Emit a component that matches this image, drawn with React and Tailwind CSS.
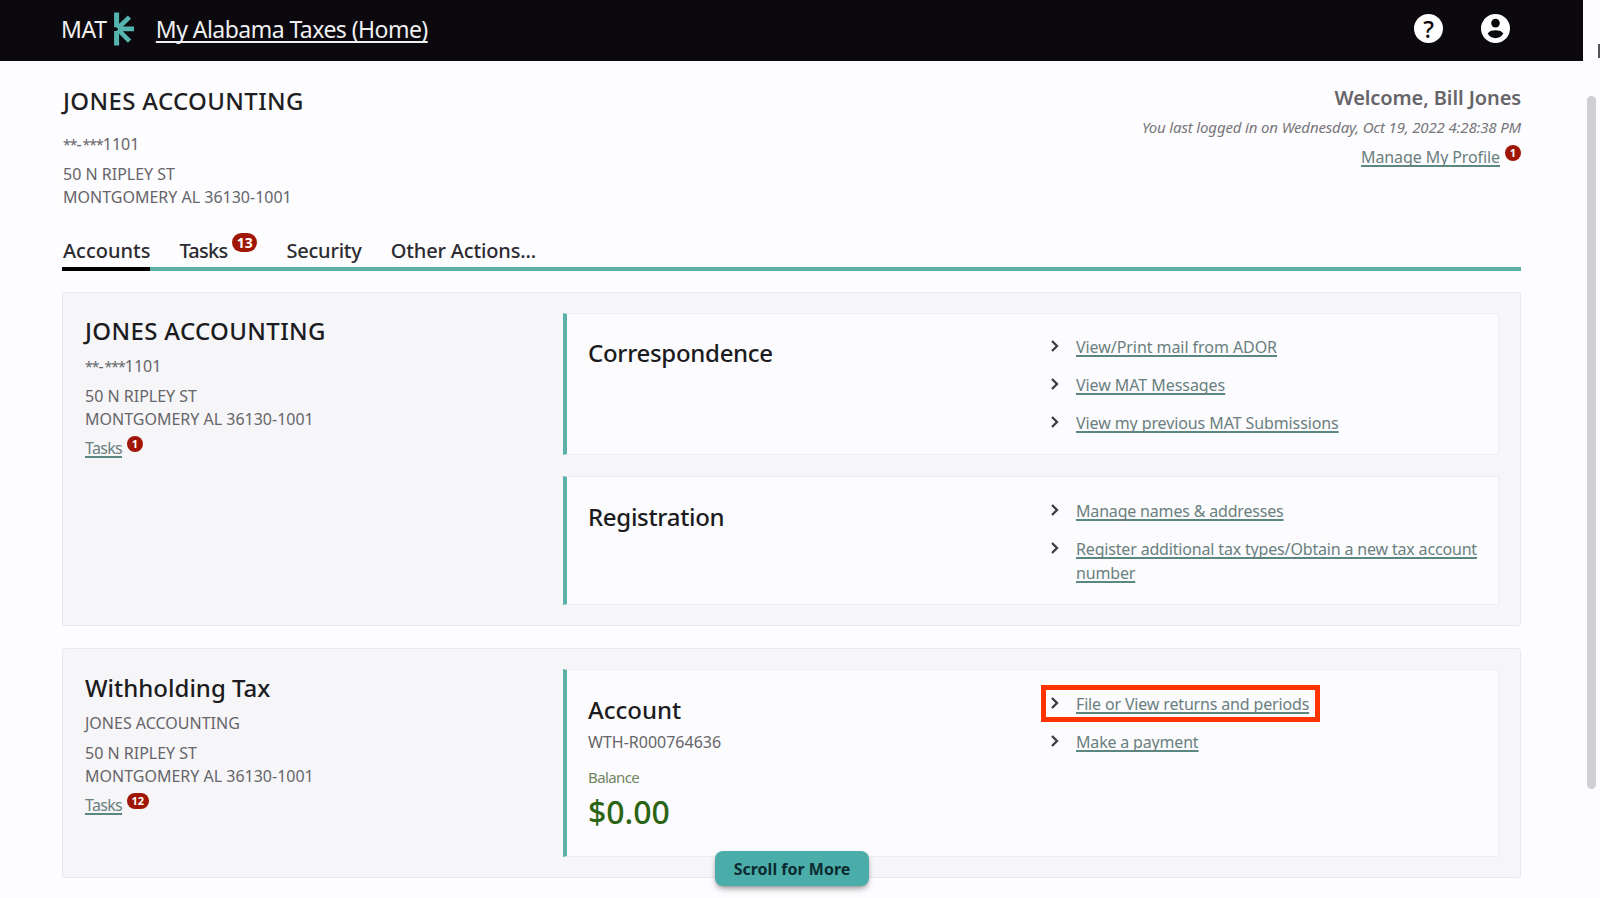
const correspondenceLinks = [
  { label: 'View/Print mail from ADOR', className: 'tracking-[-0.06px]' },
  { label: 'View MAT Messages', className: 'tracking-[-0.06px]' },
  { label: 'View my previous MAT Submissions', className: 'tracking-[-0.1px]' },
];

const registrationLinks = [
  { label: 'Manage names & addresses', className: 'tracking-[-0.18px]' },
  { label: 'Register additional tax types/Obtain a new tax account number', className: 'tracking-[-0.17px]' },
];

const accountLinks = [
  { label: 'File or View returns and periods', className: 'tracking-[-0.16px]', highlighted: true },
  { label: 'Make a payment', className: 'tracking-[-0.18px]' },
];

const linkClass = 'text-[#6a807e] underline decoration-[#5c8681] decoration-[1.5px] underline-offset-[1.5px] [text-decoration-skip-ink:none]';

const Logo = () => (
  <svg className="w-[21px] h-[34px]" viewBox="0 0 21 34" fill="none" stroke="#55b5ae">
    <path d="M2.6 0.5V15.2M2.6 19V33.5" strokeWidth="5" />
    <path d="M4 16.9H20M3.5 16.5L15.5 5.2M4 17.5L15.5 29.2" strokeWidth="4.6" />
  </svg>
);

const HelpIcon = () => (
  <span className="flex h-[29px] w-[29px] items-center justify-center rounded-full bg-white text-[24px] leading-[29px] font-medium text-[#0b090d]">
    ?
  </span>
);

const ProfileIcon = () => (
  <svg className="w-[29px] h-[29px]" viewBox="0 0 29 29">
    <circle cx="14.5" cy="14.5" r="14.5" fill="#fff" />
    <circle cx="14.5" cy="9.1" r="4.3" fill="#0b090d" />
    <path d="M6.7 19.6C7.6 17.4 10.9 16.2 14.5 16.2S21.4 17.4 22.3 19.6C20.7 22.5 17.9 24.2 14.5 24.2S8.3 22.5 6.7 19.6Z" fill="#0b090d" />
  </svg>
);

const Badge = ({ children }) => (
  <span className="flex items-center justify-center h-[16px] min-w-[16px] px-[4.5px] rounded-full bg-[#a01606] text-white text-[11px] font-bold">
    {children}
  </span>
);

const MaskedId = () => (
  <p className="h-[24px] leading-[24px]">
    <span className="text-[14px] leading-none tracking-[-1px]">**</span>
    <span className="tracking-[1px]">-</span>
    <span className="text-[14px] leading-none tracking-[-1px]">***</span>
    1101
  </p>
);

const Address = () => (
  <div className="mt-[6.5px] leading-[23.3px]">
    <p>50 N RIPLEY ST</p>
    <p>MONTGOMERY AL 36130-1001</p>
  </div>
);

const TasksLink = ({ count }) => (
  <div className="mt-[5px] flex items-start gap-[5px]">
    <a href="#" className={`${linkClass} leading-[24px] tracking-[-0.7px]`}>Tasks</a>
    <Badge>{count}</Badge>
  </div>
);

const LinkList = ({ links }) => (
  <ul className="w-[428px] flex flex-col gap-[14.5px]">
    {links.map(link => (
      <li key={link.label} className="relative flex items-start leading-[23.5px]">
        <svg className="w-[8px] h-[12px] mt-[4px] mr-[17px] shrink-0" viewBox="0 0 8 12" fill="none" stroke="#3b3b40" strokeWidth="2.3">
          <path d="M1 1L6 6L1 11" />
        </svg>
        <a href="#" className={`${linkClass} ${link.className}`}>{link.label}</a>
        {link.highlighted && (
          <span className="absolute -left-[10px] -top-[8px] w-[279px] h-[37px] border-[5px] border-[#ff3300]" />
        )}
      </li>
    ))}
  </ul>
);

const Panel = ({ title, titleClass, links, className, children }) => (
  <div className={`flex justify-between border border-l-4 border-[#eeedf0] border-l-[#5cb0a9] bg-[#fcfbfe] pl-[21px] pr-[19px] ${className}`}>
    <div>
      <h3 className={`mt-[1px] text-2xl font-medium text-[#1b1b20] ${titleClass}`}>{title}</h3>
      {children}
    </div>
    <LinkList links={links} />
  </div>
);

const Section = ({ title, titleClass, info, tasks, className, children }) => (
  <section className={`flex rounded-[3px] border border-[#e9e8eb] bg-[#f6f5f8] p-[20px] pr-[21px] ${className}`}>
    <div className="w-[480px] shrink-0 pl-[2px]">
      <h2 className={`mb-[7px] text-2xl font-medium text-[#1b1b20] ${titleClass}`}>{title}</h2>
      {info}
      <Address />
      <TasksLink count={tasks} />
    </div>
    <div className="flex-1 flex flex-col gap-[21px]">{children}</div>
  </section>
);

const Header = () => (
  <header className="h-[61px] bg-[#0b090d] text-[#f0eff2] flex items-center justify-between pl-[61px] pr-[73px] pb-[4px]">
    <div className="flex items-center">
      <span className="text-[23px] tracking-[-0.3px] mt-[2px]">MAT</span>
      <span className="ml-[7px]"><Logo /></span>
      <a href="#" className="ml-[21px] mt-[2px] text-[23px] tracking-[-0.54px] underline decoration-[1.5px] underline-offset-[3px] [text-decoration-skip-ink:none]">
        My Alabama Taxes (Home)
      </a>
    </div>
    <div className="flex items-center gap-[38px]">
      <HelpIcon />
      <ProfileIcon />
    </div>
  </header>
);

const App = () => {
  return (
    <div className="flex h-[898px] w-[1600px] overflow-hidden bg-[#fdfcfe] font-['Noto_Sans',sans-serif] text-base text-[#666569]">
      <div className="relative w-[1583px]">
        <Header />
        <main className="pl-[62px] pr-[62px]">
          <div className="flex justify-between h-[175px]">
            <div className="pt-[24px] pl-px">
              <h1 className="mb-[15px] text-[24px] leading-[32px] text-[#1f1e23] font-medium tracking-[0.35px]">JONES ACCOUNTING</h1>
              <MaskedId />
              <Address />
            </div>
            <div className="pt-[23px] flex flex-col items-end">
              <p className="text-[20px] leading-[28px] font-semibold tracking-[-0.1px]">Welcome, Bill Jones</p>
              <p className="mt-[3px] text-[15px] leading-[24px] italic tracking-[-0.15px] text-[#77767a]">You last logged in on Wednesday, Oct 19, 2022 4:28:38 PM</p>
              <div className="mt-[6px] flex items-start gap-[5px]">
                <a href="#" className={`${linkClass} leading-[24px] tracking-[-0.1px]`}>Manage My Profile</a>
                <Badge>1</Badge>
              </div>
            </div>
          </div>

          <nav className="flex gap-[30px] h-[35px] border-b-4 border-[#5cb0a9] text-[20px] leading-[30px] font-medium text-[#2c2b30]">
            <a href="#" className="h-[35px] border-b-4 border-black pl-px">Accounts</a>
            <a href="#" className="-ml-[1px] flex gap-[5px]">
              <span className="tracking-[-0.75px]">Tasks</span>
              <span className="-mt-[3px] flex h-[19px] w-[25px] items-center justify-center rounded-full bg-[#a01606] text-[14px] font-bold text-white">13</span>
            </a>
            <a href="#" className="-ml-[1px] tracking-[-0.2px]">Security</a>
            <a href="#" className="-ml-[1px] tracking-[-0.15px]">Other Actions...</a>
          </nav>

          <Section title="JONES ACCOUNTING" titleClass="mt-[2px] tracking-[0.35px]" info={<MaskedId />} tasks="1" className="mt-[21px]">
            <Panel title="Correspondence" titleClass="tracking-[-0.3px]" links={correspondenceLinks} className="h-[142px] pt-[22px]" />
            <Panel title="Registration" titleClass="tracking-[-0.3px]" links={registrationLinks} className="h-[129px] pt-[23px]" />
          </Section>

          <Section title="Withholding Tax" titleClass="mt-[3px]" info={<p className="leading-[24px]">JONES ACCOUNTING</p>} tasks="12" className="mt-[22px]">
            <Panel title="Account" links={accountLinks} className="h-[188px] pt-[23px]">
              <p className="mt-[5px] leading-[23.5px]">WTH-R000764636</p>
              <p className="mt-[12px] text-[15px] leading-[20px] tracking-[-0.6px] text-[#6f8560]">Balance</p>
              <p className="mt-[5px] text-[32px] leading-[40px] font-medium text-[#2c6416]">$0.00</p>
            </Panel>
          </Section>
        </main>

        <button className="absolute left-[715px] top-[851px] h-[35px] w-[154px] rounded-lg bg-[#4aada9] text-base font-bold text-[#0c2a30] shadow-md shadow-black/30">
          Scroll for More
        </button>
      </div>

      <div className="w-[17px] flex flex-col">
        <div className="mt-[44px] h-[14px] w-[2px] self-end bg-[#55545a]" />
        <div className="mt-[38px] ml-[4px] h-[693px] w-[9px] rounded-full bg-[#d0cfd3]" />
      </div>
    </div>
  );
};

export default App;
